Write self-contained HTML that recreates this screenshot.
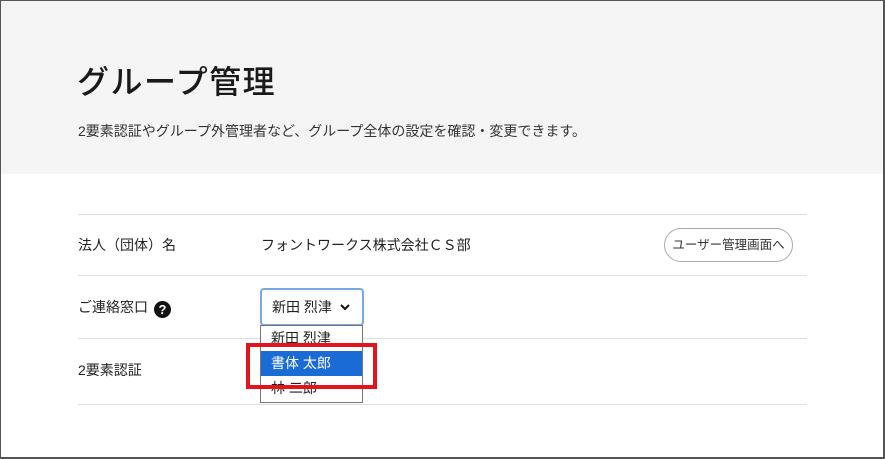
<!DOCTYPE html>
<html><head><meta charset="utf-8"><style>
*{margin:0;padding:0;box-sizing:border-box}
html,body{width:885px;height:459px;overflow:hidden;background:#fff}
body{font-family:"Liberation Sans","Noto Sans CJK JP",sans-serif;color:#222;position:relative}
.frame{position:absolute;left:0;top:0;width:885px;height:459px;border-left:1px solid #555;border-top:1px solid #555;border-right:2px solid #555;border-bottom:2px solid #555;z-index:10;pointer-events:none}
.hdr{position:absolute;left:0;top:0;width:885px;height:174px;background:#f5f5f5}
h1{position:absolute;left:77px;top:61px;font-size:32px;font-weight:500;letter-spacing:1.5px;color:#1a1a1a;line-height:42px}
.sub{position:absolute;left:78px;top:122px;font-size:14px;color:#333;line-height:18px}
.line{position:absolute;left:78px;width:729px;height:1px;background:#ddd}
.t{position:absolute;font-size:14px;line-height:20px;color:#222}
.btn{position:absolute;left:664px;top:228px;width:129px;height:34px;border:1px solid #aaa;border-radius:17px;font-size:12.5px;line-height:32px;text-align:center;color:#333;background:#fff}
.q{display:inline-block;width:17px;height:17px;border-radius:50%;background:#111;color:#fff;font-size:13px;font-weight:700;text-align:center;line-height:17px;vertical-align:-2px;margin-left:6px}
.sel{position:absolute;left:260px;top:288px;width:104px;height:38px;border:2px solid #7aa7e6;border-radius:4px;background:#fff;font-size:14px;line-height:34px;padding-left:10px}
.list{position:absolute;left:260px;top:325px;width:103px;height:78px;border:1px solid #777;background:#fff;overflow:hidden;font-size:14px}
.it{height:25px;line-height:25px;padding-left:10px}
.hl{background:#1a6bd6;color:#fff}
.red{position:absolute;left:246px;top:343px;width:131px;height:46px;border:4px solid #e3141c}
</style></head><body>
<div class="hdr"></div>
<h1>グループ管理</h1>
<div class="sub">2要素認証やグループ外管理者など、グループ全体の設定を確認・変更できます。</div>
<div class="line" style="top:214px"></div>
<div class="line" style="top:275px"></div>
<div class="line" style="top:338px"></div>
<div class="line" style="top:404px"></div>
<div class="t" style="left:78px;top:235px">法人（団体）名</div>
<div class="t" style="left:261px;top:235px">フォントワークス株式会社ＣＳ部</div>
<div class="btn">ユーザー管理画面へ</div>
<div class="t" style="left:78px;top:297px">ご連絡窓口<span class="q">?</span></div>
<div class="t" style="left:78px;top:360px">2要素認証</div>
<div class="sel">新田 烈津 <svg width="12" height="10" viewBox="0 0 12 10" style="vertical-align:0;margin-left:3px"><path d="M2 3 L6 7 L10 3" stroke="#111" stroke-width="2" fill="none"/></svg></div>
<div class="list">
<div class="it">新田 烈津</div>
<div class="it hl">書体 太郎</div>
<div class="it">林 二郎</div>
</div>
<div class="red"></div>
<div class="frame"></div>
</body></html>
